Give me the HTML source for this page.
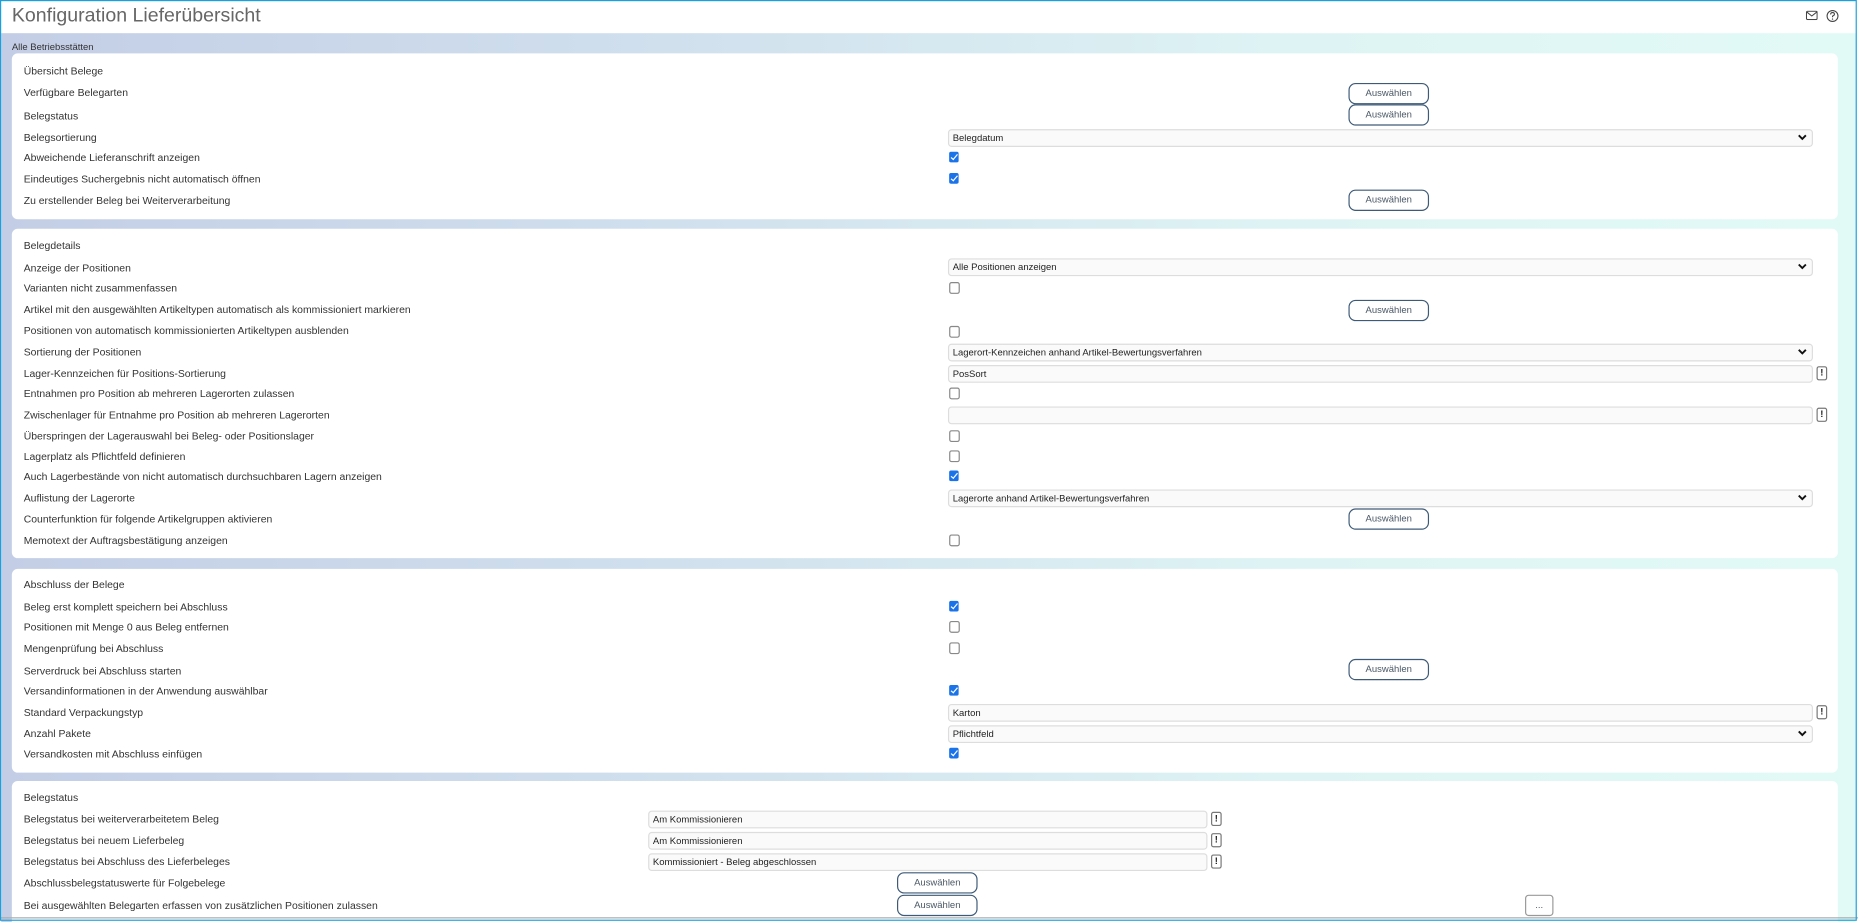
<!DOCTYPE html>
<html><head><meta charset="utf-8"><style>
html,body{margin:0;padding:0;width:1858px;height:922px;overflow:hidden;background:#fff}
#s{position:absolute;left:0;top:0;width:1568px;height:778px;transform:scale(1.18495,1.18509);transform-origin:0 0;font-family:"Liberation Sans",Arial,sans-serif;color:#333;overflow:hidden}
.frame{position:absolute;left:0;top:0;width:1565px;height:775px;border:1.5px solid #1aa0dc;box-sizing:content-box}
.bg{position:absolute;left:1px;top:28px;width:1565px;height:750px;background:linear-gradient(to right,#c3cee6 0%,#d2e2ee 40%,#def4f4 70%,#e2faf6 100%)}
.p{position:absolute;left:10px;width:1541px;background:#fff;border-radius:5px}
.l{position:absolute;left:20px;font-size:8.8px;line-height:10px;white-space:nowrap;color:#333}
.b{position:absolute;width:66px;height:16px;border:1px solid #3d5a78;border-radius:6px;background:#fff;font-size:8px;line-height:16px;text-align:center;color:#4a5866;box-sizing:content-box}
.i{position:absolute;height:13px;border:1px solid #ddd;border-radius:3px;background:#fafafa;font-size:8px;line-height:13px;padding-left:3px;color:#222;box-sizing:content-box}
.i svg{position:absolute;right:4px;top:3px}
.x{position:absolute;width:7px;height:10px;border:1px solid #777;border-radius:2px;font-size:8px;font-weight:bold;line-height:10px;text-align:center;color:#222;background:#fff}
.c{position:absolute;left:801px;width:7px;height:8px;border:1px solid #888;border-radius:2px;background:#fff}
.k{position:absolute;left:801px;width:8px;height:9px;border-radius:1.5px;background:#1a73e8}
.k:after{content:"";position:absolute;left:2.6px;top:0.8px;width:2px;height:4.5px;border:solid #fff;border-width:0 1.4px 1.4px 0;transform:rotate(40deg)}
</style></head><body><div id="s">
<div class="bg"></div>
<div style="position:absolute;left:10px;top:4px;font-size:16.5px;color:#666;white-space:nowrap">Konfiguration Lieferübersicht</div>
<svg style="position:absolute;left:1524px;top:9px" width="10" height="8" viewBox="0 0 10 8"><rect x="0.5" y="0.5" width="9" height="7" rx="1" fill="none" stroke="#444" stroke-width="0.9"/><path d="M0.8 1.2 L5 4.5 L9.2 1.2" fill="none" stroke="#444" stroke-width="0.9"/></svg>
<svg style="position:absolute;left:1541px;top:8px" width="11" height="11" viewBox="0 0 11 11"><circle cx="5.5" cy="5.5" r="4.6" fill="none" stroke="#444" stroke-width="0.9"/><path d="M3.9 4.2 Q3.9 2.6 5.5 2.6 Q7.1 2.6 7.1 4 Q7.1 5 5.5 5.6 L5.5 6.6" fill="none" stroke="#444" stroke-width="0.9"/><circle cx="5.5" cy="8.1" r="0.55" fill="#444"/></svg>
<div class="l" style="left:10px;top:35px;font-size:8px">Alle Betriebsstätten</div>

<div class="p" style="top:45px;height:140px"></div>
<div class="p" style="top:193px;height:278px"></div>
<div class="p" style="top:480px;height:172px"></div>
<div class="p" style="top:659px;height:130px"></div>

<!-- panel 1 -->
<div class="l" style="top:55px">Übersicht Belege</div>
<div class="l" style="top:73px">Verfügbare Belegarten</div><div class="b" style="left:1138px;top:70px">Auswählen</div>
<div class="l" style="top:93px">Belegstatus</div><div class="b" style="left:1138px;top:88px">Auswählen</div>
<div class="l" style="top:111px">Belegsortierung</div><div class="i" style="left:800px;top:109px;width:725px">Belegdatum<svg width="8" height="6" viewBox="0 0 8 6"><path d="M1 1.2 L4 4.2 L7 1.2" fill="none" stroke="#111" stroke-width="1.6"/></svg></div>
<div class="l" style="top:128px">Abweichende Lieferanschrift anzeigen</div><div class="k" style="top:128px"></div>
<div class="l" style="top:146px">Eindeutiges Suchergebnis nicht automatisch öffnen</div><div class="k" style="top:146px"></div>
<div class="l" style="top:164px">Zu erstellender Beleg bei Weiterverarbeitung</div><div class="b" style="left:1138px;top:160px">Auswählen</div>

<!-- panel 2 -->
<div class="l" style="top:202px">Belegdetails</div>
<div class="l" style="top:221px">Anzeige der Positionen</div><div class="i" style="left:800px;top:218px;width:725px">Alle Positionen anzeigen<svg width="8" height="6" viewBox="0 0 8 6"><path d="M1 1.2 L4 4.2 L7 1.2" fill="none" stroke="#111" stroke-width="1.6"/></svg></div>
<div class="l" style="top:238px">Varianten nicht zusammenfassen</div><div class="c" style="top:238px"></div>
<div class="l" style="top:256px">Artikel mit den ausgewählten Artikeltypen automatisch als kommissioniert markieren</div><div class="b" style="left:1138px;top:253px">Auswählen</div>
<div class="l" style="top:274px">Positionen von automatisch kommissionierten Artikeltypen ausblenden</div><div class="c" style="top:275px"></div>
<div class="l" style="top:292px">Sortierung der Positionen</div><div class="i" style="left:800px;top:290px;width:725px">Lagerort-Kennzeichen anhand Artikel-Bewertungsverfahren<svg width="8" height="6" viewBox="0 0 8 6"><path d="M1 1.2 L4 4.2 L7 1.2" fill="none" stroke="#111" stroke-width="1.6"/></svg></div>
<div class="l" style="top:310px">Lager-Kennzeichen für Positions-Sortierung</div><div class="i" style="left:800px;top:308px;width:725px">PosSort</div><div class="x" style="left:1533px;top:309px">!</div>
<div class="l" style="top:327px">Entnahmen pro Position ab mehreren Lagerorten zulassen</div><div class="c" style="top:327px"></div>
<div class="l" style="top:345px">Zwischenlager für Entnahme pro Position ab mehreren Lagerorten</div><div class="i" style="left:800px;top:343px;width:725px"></div><div class="x" style="left:1533px;top:344px">!</div>
<div class="l" style="top:363px">Überspringen der Lagerauswahl bei Beleg- oder Positionslager</div><div class="c" style="top:363px"></div>
<div class="l" style="top:380px">Lagerplatz als Pflichtfeld definieren</div><div class="c" style="top:380px"></div>
<div class="l" style="top:397px">Auch Lagerbestände von nicht automatisch durchsuchbaren Lagern anzeigen</div><div class="k" style="top:397px"></div>
<div class="l" style="top:415px">Auflistung der Lagerorte</div><div class="i" style="left:800px;top:413px;width:725px">Lagerorte anhand Artikel-Bewertungsverfahren<svg width="8" height="6" viewBox="0 0 8 6"><path d="M1 1.2 L4 4.2 L7 1.2" fill="none" stroke="#111" stroke-width="1.6"/></svg></div>
<div class="l" style="top:433px">Counterfunktion für folgende Artikelgruppen aktivieren</div><div class="b" style="left:1138px;top:429px">Auswählen</div>
<div class="l" style="top:451px">Memotext der Auftragsbestätigung anzeigen</div><div class="c" style="top:451px"></div>

<!-- panel 3 -->
<div class="l" style="top:488px">Abschluss der Belege</div>
<div class="l" style="top:507px">Beleg erst komplett speichern bei Abschluss</div><div class="k" style="top:507px"></div>
<div class="l" style="top:524px">Positionen mit Menge 0 aus Beleg entfernen</div><div class="c" style="top:524px"></div>
<div class="l" style="top:542px">Mengenprüfung bei Abschluss</div><div class="c" style="top:542px"></div>
<div class="l" style="top:561px">Serverdruck bei Abschluss starten</div><div class="b" style="left:1138px;top:556px">Auswählen</div>
<div class="l" style="top:578px">Versandinformationen in der Anwendung auswählbar</div><div class="k" style="top:578px"></div>
<div class="l" style="top:596px">Standard Verpackungstyp</div><div class="i" style="left:800px;top:594px;width:725px">Karton</div><div class="x" style="left:1533px;top:595px">!</div>
<div class="l" style="top:614px">Anzahl Pakete</div><div class="i" style="left:800px;top:612px;width:725px">Pflichtfeld<svg width="8" height="6" viewBox="0 0 8 6"><path d="M1 1.2 L4 4.2 L7 1.2" fill="none" stroke="#111" stroke-width="1.6"/></svg></div>
<div class="l" style="top:631px">Versandkosten mit Abschluss einfügen</div><div class="k" style="top:631px"></div>

<!-- panel 4 -->
<div class="l" style="top:668px">Belegstatus</div>
<div class="l" style="top:686px">Belegstatus bei weiterverarbeitetem Beleg</div><div class="i" style="left:547px;top:684px;width:467px">Am Kommissionieren</div><div class="x" style="left:1022px;top:685px">!</div>
<div class="l" style="top:704px">Belegstatus bei neuem Lieferbeleg</div><div class="i" style="left:547px;top:702px;width:467px">Am Kommissionieren</div><div class="x" style="left:1022px;top:703px">!</div>
<div class="l" style="top:722px">Belegstatus bei Abschluss des Lieferbeleges</div><div class="i" style="left:547px;top:720px;width:467px">Kommissioniert - Beleg abgeschlossen</div><div class="x" style="left:1022px;top:721px">!</div>
<div class="l" style="top:740px">Abschlussbelegstatuswerte für Folgebelege</div><div class="b" style="left:757px;top:736px">Auswählen</div>
<div class="l" style="top:759px">Bei ausgewählten Belegarten erfassen von zusätzlichen Positionen zulassen</div><div class="b" style="left:757px;top:755px">Auswählen</div>
<div class="b" style="left:1287px;top:755px;width:22px;border-color:#999;border-radius:3px">...</div>
<div style="position:absolute;left:0;top:774px;width:1568px;height:1px;background:#aaa"></div>
<div class="frame"></div>
</div></body></html>
